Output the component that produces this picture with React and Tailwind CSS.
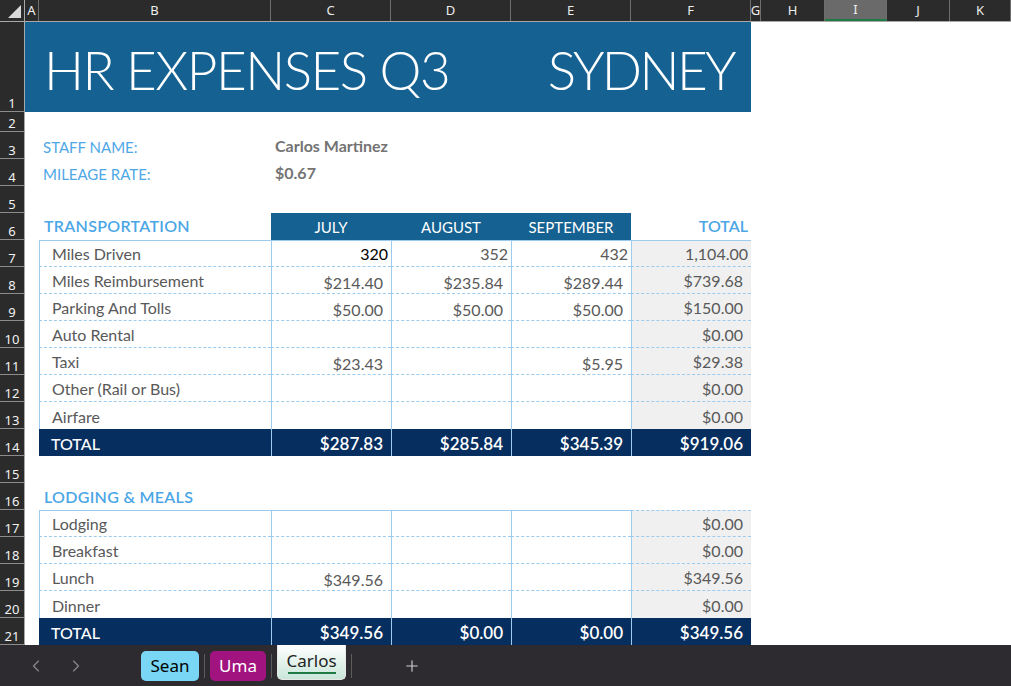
import React from 'react'
import { ChevronLeft, ChevronRight, Plus } from 'lucide-react'

const BORDER = 'border-[#9dcbee]'

const transport = [
    { label: 'Miles Driven', c: '320', d: '352', e: '432', f: '1,104.00', plain: true },
    { label: 'Miles Reimbursement', c: '$214.40', d: '$235.84', e: '$289.44', f: '$739.68' },
    { label: 'Parking And Tolls', c: '$50.00', d: '$50.00', e: '$50.00', f: '$150.00' },
    { label: 'Auto Rental', c: '', d: '', e: '', f: '$0.00' },
    { label: 'Taxi', c: '$23.43', d: '', e: '$5.95', f: '$29.38' },
    { label: 'Other (Rail or Bus)', c: '', d: '', e: '', f: '$0.00' },
    { label: 'Airfare', c: '', d: '', e: '', f: '$0.00' },
]

const lodging = [
    { label: 'Lodging', c: '', d: '', e: '', f: '$0.00' },
    { label: 'Breakfast', c: '', d: '', e: '', f: '$0.00' },
    { label: 'Lunch', c: '$349.56', d: '', e: '', f: '$349.56' },
    { label: 'Dinner', c: '', d: '', e: '', f: '$0.00' },
]

const RowNum = ({ n }) => (
    <div className="w-[25px] shrink-0 bg-[#2b2b2b] border-r border-b border-r-[#a8a8a8] border-b-[#8c8c8c] flex items-end justify-center pb-[1px] text-[13px] leading-none text-[#f2f2f2] font-['Noto_Sans',sans-serif]">
        {n}
    </div>
)

const Row = ({ n, h, children }) => (
    <div className={`flex ${h}`}>
        <RowNum n={n} />
        {children}
        <div className="flex-1 bg-white" />
    </div>
)

const Blank = () => (
    <>
        <div className="w-[14px] shrink-0" />
        <div className="w-[232px] shrink-0" />
        <div className="w-[120px] shrink-0" />
        <div className="w-[120px] shrink-0" />
        <div className="w-[120px] shrink-0" />
        <div className="w-[120px] shrink-0" />
        <div className="w-[10px] shrink-0" />
    </>
)

const BodyRow = ({ n, row, first, last, topDashedF }) => {
    const top = first ? 'border-t' : ''
    const bottom = last ? '' : 'border-b [border-bottom-style:dashed]'
    const num = (v, black) => (
        <div className={`w-[120px] shrink-0 border-l ${BORDER} ${top} ${bottom} flex items-end justify-end leading-[20px] ${row.plain ? 'pr-[3px] pb-[2px]' : 'pr-[8px] pb-0'} ${black ? 'text-black' : 'text-[#595959]'}`}>
            {v}
        </div>
    )
    return (
        <Row n={n} h="h-[27px]">
            <div className="w-[14px] shrink-0" />
            <div className={`w-[232px] shrink-0 border-l ${BORDER} ${top} ${bottom} flex items-end leading-[20px] pl-[12px] pb-[2px] text-[#595959]`}>
                {row.label}
            </div>
            {num(row.c, row.plain)}
            {num(row.d)}
            {num(row.e)}
            <div className={`w-[120px] shrink-0 bg-[#f0f0f0] border-l ${BORDER} ${top} ${topDashedF ? '[border-top-style:dashed]' : ''} ${bottom} flex items-end justify-end leading-[20px] pb-[2px] ${row.plain ? 'pr-[3px]' : 'pr-[8px]'} text-[#595959]`}>
                {row.f}
            </div>
            <div className="w-[10px] shrink-0" />
        </Row>
    )
}

const TotalRow = ({ n, c, d, e, f }) => (
    <Row n={n} h="h-[27px]">
        <div className="w-[14px] shrink-0" />
        <div className="w-[232px] shrink-0 bg-[#062e5f] flex items-end leading-[20px] pl-[12px] pb-[2px] text-white font-medium">TOTAL</div>
        {[c, d, e, f].map((v, i) => (
            <div key={i} className={`w-[120px] shrink-0 bg-[#062e5f] border-l ${BORDER} flex items-end justify-end leading-[20px] pr-[8px] pb-[2px] text-[17px] text-white font-semibold`}>
                {v}
            </div>
        ))}
        <div className="w-[10px] shrink-0" />
    </Row>
)

const Section = ({ n, title, months }) => (
    <Row n={n} h="h-[27px]">
        <div className="w-[14px] shrink-0" />
        <div className={`w-[232px] shrink-0 flex items-end pl-[5px] ${months ? 'pb-[2px]' : 'pb-[1px]'} text-[16px] font-semibold tracking-[0.3px] text-[#4aa6e6]`}>
            {title}
        </div>
        {months ? (
            <>
                <div className="w-[120px] shrink-0 bg-[#156191] flex items-end justify-center pb-[2px] text-[15px] text-white">JULY</div>
                <div className="w-[120px] shrink-0 bg-[#156191] flex items-end justify-center pb-[2px] text-[15px] text-white">AUGUST</div>
                <div className="w-[120px] shrink-0 bg-[#156191] flex items-end justify-center pb-[2px] text-[15px] text-white">SEPTEMBER</div>
                <div className="w-[120px] shrink-0 flex items-end justify-end pr-[3px] pb-[2px] text-[16px] font-semibold text-[#4aa6e6]">TOTAL</div>
            </>
        ) : (
            <>
                <div className="w-[120px] shrink-0" />
                <div className="w-[120px] shrink-0" />
                <div className="w-[120px] shrink-0" />
                <div className="w-[120px] shrink-0" />
            </>
        )}
        <div className="w-[10px] shrink-0" />
    </Row>
)

const InfoRow = ({ n, label, value }) => (
    <Row n={n} h="h-[27px]">
        <div className="w-[14px] shrink-0" />
        <div className="w-[232px] shrink-0 flex items-end pl-[4px] pb-[1px] text-[15px] text-[#4ea7e7]">{label}</div>
        <div className="w-[360px] shrink-0 flex items-end pl-[4px] pb-[1px] font-bold text-[#737373]">{value}</div>
        <div className="w-[120px] shrink-0" />
        <div className="w-[10px] shrink-0" />
    </Row>
)

const colHeads = [
    ['A', 'w-[14px]'],
    ['B', 'w-[232px]'],
    ['C', 'w-[120px]'],
    ['D', 'w-[120px]'],
    ['E', 'w-[120px]'],
    ['F', 'w-[120px]'],
    ['G', 'w-[10px]'],
    ['H', 'w-[64px]'],
    ['I', 'w-[62px]'],
    ['J', 'w-[63px]'],
    ['K', 'flex-1'],
]

export default function App() {
    return (
        <div className="w-[1011px] h-[686px] overflow-hidden bg-white flex flex-col font-['Lato',sans-serif] text-[16px]">

            {/* COLUMN HEADERS */}
            <div className="flex h-[22px] shrink-0 bg-[#2b2b2b] border-b border-[#a8a8a8] font-['Noto_Sans',sans-serif] text-[13px] text-[#ededed]">
                <div className="w-[25px] shrink-0 border-r border-[#a8a8a8] relative">
                    <svg className="absolute right-[3px] bottom-[3px]" width="13" height="13" viewBox="0 0 13 13">
                        <polygon points="13,0 13,13 0,13" fill="#d9d9d9" />
                    </svg>
                </div>
                {colHeads.map(([l, w]) => (
                    <div
                        key={l}
                        className={`${w} shrink-0 flex items-center justify-center border-r border-[#6e6e6e] ${l === 'I' ? 'bg-[#6a6a6a] border-b-2 border-b-[#1f7a45]' : ''}`}
                    >
                        {l}
                    </div>
                ))}
            </div>

            {/* TITLE */}
            <Row n={1} h="h-[90px]">
                <div className="w-[726px] shrink-0 bg-[#156191] flex items-center justify-between pl-[19px] pr-[17px] pt-[5px] text-white font-light text-[53px] tracking-[-1.5px] leading-none">
                    <span>HR EXPENSES Q3</span>
                    <span className="tracking-[-2.6px]">SYDNEY</span>
                </div>
                <div className="w-[10px] shrink-0" />
            </Row>

            <Row n={2} h="h-[20px]"><Blank /></Row>
            <InfoRow n={3} label="STAFF NAME:" value="Carlos Martinez" />
            <InfoRow n={4} label="MILEAGE RATE:" value="$0.67" />
            <Row n={5} h="h-[27px]"><Blank /></Row>

            {/* TRANSPORTATION */}
            <Section n={6} title="TRANSPORTATION" months />
            {transport.map((r, i) => (
                <BodyRow key={r.label} n={7 + i} row={r} first={i === 0} last={i === transport.length - 1} />
            ))}
            <TotalRow n={14} c="$287.83" d="$285.84" e="$345.39" f="$919.06" />

            <Row n={15} h="h-[27px]"><Blank /></Row>

            {/* LODGING */}
            <Section n={16} title="LODGING & MEALS" />
            {lodging.map((r, i) => (
                <BodyRow key={r.label} n={17 + i} row={r} first={i === 0} topDashedF last={i === lodging.length - 1} />
            ))}
            <TotalRow n={21} c="$349.56" d="$0.00" e="$0.00" f="$349.56" />

            {/* SHEET TABS */}
            <div className="flex-1 bg-[#2d2b2f] flex items-center font-['Noto_Sans',sans-serif]">
                <div className="w-[141px] shrink-0 flex items-center">
                    <ChevronLeft className="ml-[26px] text-[#8a8a8a]" size={20} strokeWidth={1.4} />
                    <ChevronRight className="ml-[20px] text-[#8a8a8a]" size={20} strokeWidth={1.4} />
                </div>
                <div className="w-[58px] h-[30px] rounded-[5px] bg-[#79d7f5] flex items-center justify-center text-[17px] text-black">Sean</div>
                <div className="w-px h-[24px] bg-[#5c5c5c] mx-[5px]" />
                <div className="w-[56px] h-[30px] rounded-[5px] bg-[#a1137f] flex items-center justify-center text-[17px] text-white">Uma</div>
                <div className="w-px h-[24px] bg-[#5c5c5c] mx-[5px]" />
                <div className="w-[69px] h-[35px] self-start rounded-b-[5px] border border-t-0 border-[#e8e8e8] bg-gradient-to-b from-white to-[#c9e6d9] flex flex-col items-center justify-center text-[17px] text-[#222]">
                    <span className="leading-[22px]">Carlos</span>
                    <span className="w-[48px] h-[2px] bg-[#1f7a45]" />
                </div>
                <div className="w-px h-[24px] bg-[#5c5c5c] mx-[5px]" />
                <Plus className="ml-[46px] text-[#d0d0d0]" size={18} strokeWidth={1.5} />
            </div>

        </div>
    )
}
